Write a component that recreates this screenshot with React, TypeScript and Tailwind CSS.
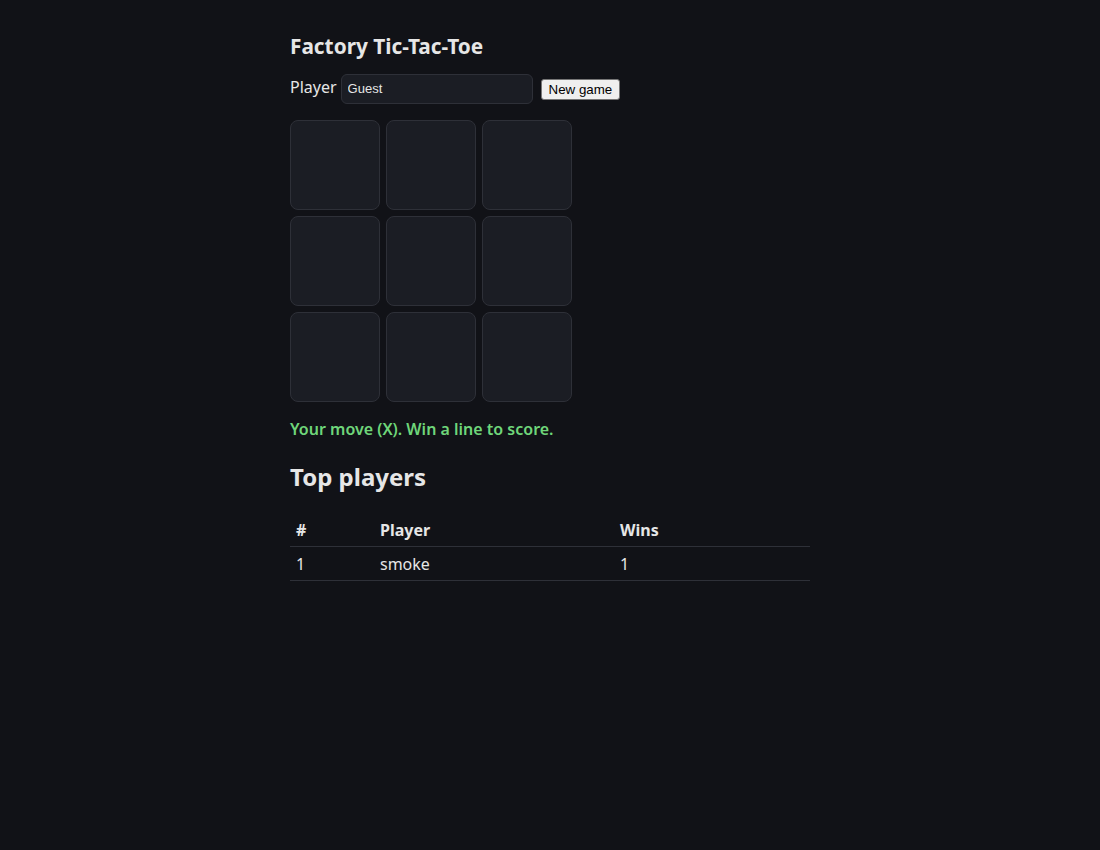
const cells = Array.from({ length: 9 });

const leaders = [{ rank: 1, name: "smoke", wins: 1 }];

export default function App() {
  return (
    <div className="min-h-screen bg-[#111217] text-[#e6e6e6] font-['Noto_Sans',sans-serif]">
      <div className="w-[520px] mx-auto pt-8">
        <h1 className="text-[20.8px] leading-[28px] font-bold">Factory Tic-Tac-Toe</h1>

        <div className="mt-[14px] flex items-center gap-1">
          <label className="text-base mb-1">Player</label>
          <input
            defaultValue="Guest"
            className="w-[192px] h-[30px] px-[6px] pb-px rounded-md bg-[#1b1d24] border border-[#2e3038] text-[13px] text-[#e6e6e6] font-['Liberation_Sans',sans-serif] outline-none"
          />
          <button className="ml-1 px-[7px] h-[21px] bg-[#efefef] border border-[#767676] rounded-[3px] text-[13.333px] text-black font-['Liberation_Sans',sans-serif]">
            New game
          </button>
        </div>

        <div className="mt-4 grid grid-cols-[repeat(3,90px)] gap-[6px]">
          {cells.map((_, i) => (
            <button
              key={i}
              className="w-[90px] h-[90px] rounded-lg bg-[#1b1d24] border border-[#2e3038]"
            />
          ))}
        </div>

        <p className="mt-[15px] text-base font-semibold text-[#6fd67a]">
          Your move (X). Win a line to score.
        </p>

        <h2 className="mt-5 text-2xl font-bold">Top players</h2>

        <table className="mt-5 w-full text-base text-left border-collapse">
          <thead>
            <tr className="border-b border-[#2e3038]">
              <th className="w-[84px] px-[6px] py-[4.5px] font-bold">#</th>
              <th className="w-[240px] px-[6px] py-[4.5px] font-bold">Player</th>
              <th className="px-[6px] py-[4.5px] font-bold">Wins</th>
            </tr>
          </thead>
          <tbody>
            {leaders.map((row) => (
              <tr key={row.rank} className="border-b border-[#2e3038]">
                <td className="px-[6px] py-[4.5px]">{row.rank}</td>
                <td className="px-[6px] py-[4.5px]">{row.name}</td>
                <td className="px-[6px] py-[4.5px]">{row.wins}</td>
              </tr>
            ))}
          </tbody>
        </table>
      </div>
    </div>
  );
}
